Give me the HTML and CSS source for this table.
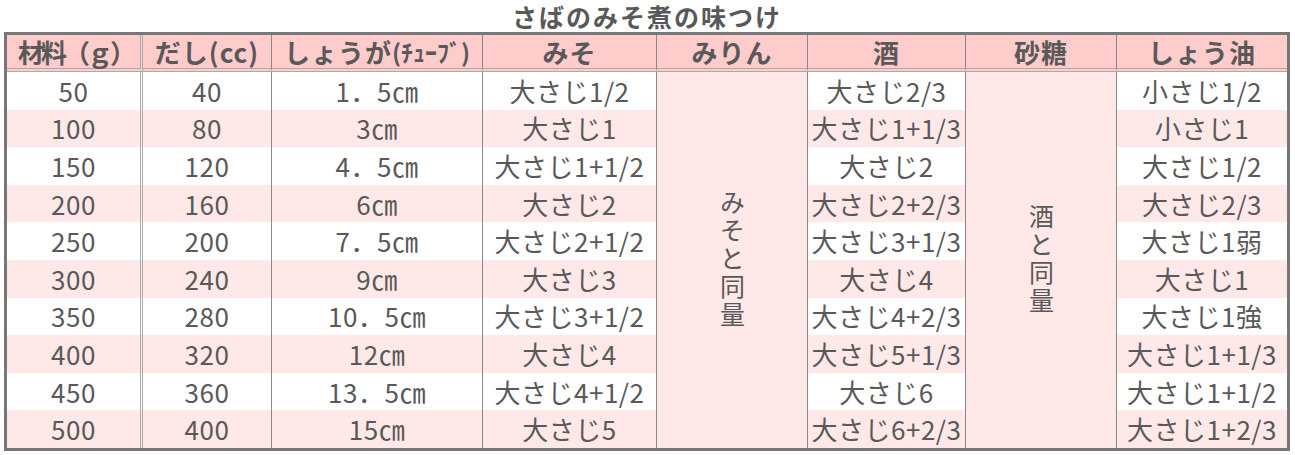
FILE: index.html
```html
<!DOCTYPE html>
<html lang="ja">
<head>
<meta charset="utf-8">
<title>さばのみそ煮の味つけ</title>
<link rel="stylesheet" href="styles.css">
</head>
<body>
<div class="page">
  <h1 class="title">さばのみそ煮の味つけ</h1>
  <div class="table">
    <div class="cell head c1 tight">材料（ｇ）</div>
    <div class="cell head">だし(cc)</div>
    <div class="cell head bl">しょうが<span class="small">(ﾁｭｰﾌﾞ)</span></div>
    <div class="cell head bl">みそ</div>
    <div class="cell head bl">みりん</div>
    <div class="cell head bl">酒</div>
    <div class="cell head bl">砂糖</div>
    <div class="cell head bl">しょう油</div>

    <div class="cell merged bl col5"><span class="vert">みそと同量</span></div>
    <div class="cell merged bl col7"><span class="vert">酒と同量</span></div>

    <div class="cell c1">50</div><div class="cell">40</div><div class="cell bl">1．5㎝</div><div class="cell bl">大さじ1/2</div><div class="cell bl">大さじ2/3</div><div class="cell bl">小さじ1/2</div>
    <div class="cell c1 alt">100</div><div class="cell alt">80</div><div class="cell bl alt">3㎝</div><div class="cell bl alt">大さじ1</div><div class="cell bl alt">大さじ1+1/3</div><div class="cell bl alt">小さじ1</div>
    <div class="cell c1">150</div><div class="cell">120</div><div class="cell bl">4．5㎝</div><div class="cell bl">大さじ1+1/2</div><div class="cell bl">大さじ2</div><div class="cell bl">大さじ1/2</div>
    <div class="cell c1 alt">200</div><div class="cell alt">160</div><div class="cell bl alt">6㎝</div><div class="cell bl alt">大さじ2</div><div class="cell bl alt">大さじ2+2/3</div><div class="cell bl alt">大さじ2/3</div>
    <div class="cell c1">250</div><div class="cell">200</div><div class="cell bl">7．5㎝</div><div class="cell bl">大さじ2+1/2</div><div class="cell bl">大さじ3+1/3</div><div class="cell bl">大さじ1弱</div>
    <div class="cell c1 alt">300</div><div class="cell alt">240</div><div class="cell bl alt">9㎝</div><div class="cell bl alt">大さじ3</div><div class="cell bl alt">大さじ4</div><div class="cell bl alt">大さじ1</div>
    <div class="cell c1">350</div><div class="cell">280</div><div class="cell bl">10．5㎝</div><div class="cell bl">大さじ3+1/2</div><div class="cell bl">大さじ4+2/3</div><div class="cell bl">大さじ1強</div>
    <div class="cell c1 alt">400</div><div class="cell alt">320</div><div class="cell bl alt">12㎝</div><div class="cell bl alt">大さじ4</div><div class="cell bl alt">大さじ5+1/3</div><div class="cell bl alt">大さじ1+1/3</div>
    <div class="cell c1">450</div><div class="cell">360</div><div class="cell bl">13．5㎝</div><div class="cell bl">大さじ4+1/2</div><div class="cell bl">大さじ6</div><div class="cell bl">大さじ1+1/2</div>
    <div class="cell c1 alt">500</div><div class="cell alt">400</div><div class="cell bl alt">15㎝</div><div class="cell bl alt">大さじ5</div><div class="cell bl alt">大さじ6+2/3</div><div class="cell bl alt">大さじ1+2/3</div>
  </div>
</div>
</body>
</html>
```

FILE: styles.css
```css
html, body {
  margin: 0;
  padding: 0;
  background: #ffffff;
}

.page {
  padding: 0 5px 0 4px;
  font-family: "Noto Sans CJK JP", "Noto Sans", sans-serif;
  color: #595959;
}

.title {
  margin: 0;
  height: 32px;
  line-height: 32px;
  font-size: 25px;
  font-weight: 700;
  text-align: center;
  letter-spacing: 2px;
}

.table {
  box-sizing: border-box;
  width: 1286px;
  height: 419px;
  border: 3px solid #777777;
  display: grid;
  grid-template-columns: 136px 128px 211px 174px 151px 158px 151px 171px;
  grid-template-rows: 37px repeat(10, 1fr);
}

.cell {
  box-sizing: border-box;
  display: flex;
  align-items: center;
  justify-content: center;
  font-size: 26px;
  letter-spacing: 0.5px;
  line-height: 1;
  white-space: nowrap;
  background: #ffffff;
}

.cell.alt {
  background: #ffe8e8;
}

.cell.bl {
  border-left: 1px solid #888888;
}

.cell.c1 {
  border-right: 3px double #aaaaaa;
}

.cell.head {
  background: #ffcccc;
  font-weight: 700;
  letter-spacing: 1px;
  border-bottom: 4px double #aaaaaa;
}

.cell.head.tight {
  letter-spacing: -3px;
  padding-left: 4px;
}

.small {
  font-size: 24px;
  letter-spacing: 0;
}

.cell.merged {
  background: #ffe8e8;
  grid-row: 2 / 12;
}

.col5 { grid-column: 5; }
.col7 { grid-column: 7; }

.vert {
  writing-mode: vertical-rl;
  letter-spacing: 3px;
  font-size: 25px;
}
```
